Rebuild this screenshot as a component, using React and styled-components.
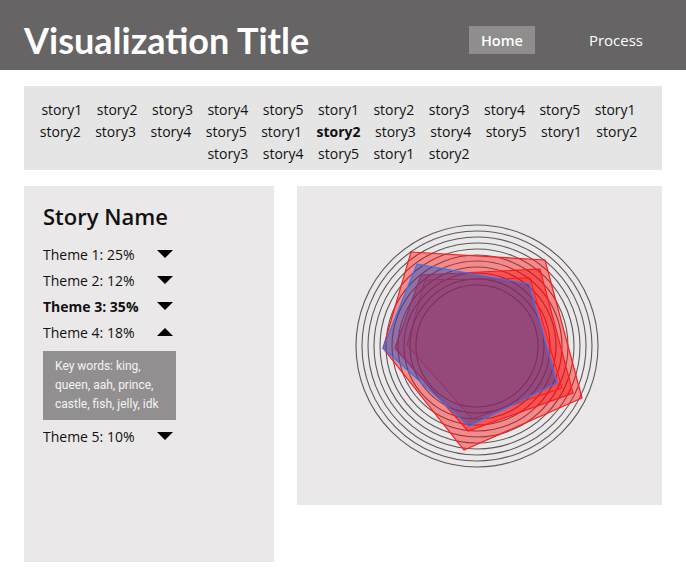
import React from "react";
import styled, { createGlobalStyle } from "styled-components";

const GlobalStyle = createGlobalStyle`
  * { box-sizing: border-box; }
  body {
    margin: 0;
    background: #fff;
    font-family: "Open Sans", "Noto Sans", sans-serif;
    color: #111;
  }
`;

const stories = Array.from({ length: 27 }, (_, i) => `story${(i % 5) + 1}`);

const themes = [
  { label: "Theme 1: 25%" },
  { label: "Theme 2: 12%" },
  { label: "Theme 3: 35%", bold: true },
  { label: "Theme 4: 18%", open: true, words: "Key words: king, queen, aah, prince, castle, fish, jelly, idk" },
  { label: "Theme 5: 10%" },
];

const rings = Array.from({ length: 11 }, (_, i) => 121 - i * 6);

const App = () => {
  return (
    <>
      <GlobalStyle />
      <Header>
        <Title>Visualization Title</Title>
        <Nav>
          <NavItem active>Home</NavItem>
          <NavItem>Process</NavItem>
        </Nav>
      </Header>

      <Main>
        <StoryBar>
          {stories.map((s, i) => (
            <Story key={i} bold={i === 16}>
              {s}
            </Story>
          ))}
        </StoryBar>

        <Panels>
          <Sidebar>
            <StoryName>Story Name</StoryName>
            {themes.map((t) => (
              <React.Fragment key={t.label}>
                <ThemeRow bold={t.bold}>
                  <span>{t.label}</span>
                  <Caret up={t.open} />
                </ThemeRow>
                {t.open && <Keywords>{t.words}</Keywords>}
              </React.Fragment>
            ))}
          </Sidebar>

          <ChartCard>
            <svg width="365" height="319" viewBox="0 0 365 319">
              {rings.map((r) => (
                <circle key={r} cx="180" cy="160" r={r} fill="none" stroke="#5a5a5a" strokeWidth="1.1" />
              ))}
              <polygon
                points="114,66 248,74 285,212 167,264 86,162"
                fill="rgba(255,0,0,0.4)"
                stroke="#ff1a1a"
                strokeWidth="1.2"
              />
              <polygon
                points="124,89 243,83 276,207 171,245 98,162"
                fill="rgba(255,0,0,0.4)"
                stroke="#ff1a1a"
                strokeWidth="1.2"
              />
              <polygon
                points="128,94 233,92 265,202 175,233 110,159"
                fill="rgba(255,0,0,0.12)"
                stroke="#ff1a1a"
                strokeWidth="1"
              />
              <polygon
                points="120,78 232,98 260,197 172,240 86,162"
                fill="rgba(0,75,200,0.4)"
                stroke="#2a78ff"
                strokeWidth="1.2"
              />
            </svg>
          </ChartCard>
        </Panels>
      </Main>
    </>
  );
};

export default App;

const Header = styled.header`
  height: 70px;
  background: #666464;
  display: flex;
  align-items: center;
  justify-content: space-between;
  padding: 10px 31px 0 24px;
`;

const Title = styled.h1`
  margin: 0;
  font-family: "Lato", "Open Sans", sans-serif;
  font-weight: 700;
  font-size: 36px;
  color: #fff;
  line-height: 1;
`;

const Nav = styled.nav`
  display: flex;
  align-items: center;
  gap: 42px;
`;

const NavItem = styled.a`
  display: flex;
  align-items: center;
  height: 28px;
  padding: 0 12px;
  color: #fff;
  font-size: ${(p) => (p.active ? "14.5px" : "15px")};
  font-weight: ${(p) => (p.active ? 600 : 400)};
  background: ${(p) => (p.active ? "#8f8d8d" : "transparent")};
`;

const Main = styled.main`
  padding: 16px 24px;
`;

const StoryBar = styled.div`
  background: #e5e5e5;
  height: 84px;
  padding: 13px 19px 5px 10px;
  display: flex;
  flex-wrap: wrap;
  justify-content: center;
  align-content: flex-start;
  column-gap: 14.5px;
`;

const Story = styled.span`
  font-size: 14px;
  line-height: 22px;
  font-weight: ${(p) => (p.bold ? 700 : 400)};
  color: #111;
`;

const Panels = styled.div`
  display: flex;
  align-items: flex-start;
  gap: 23px;
  margin-top: 16px;
`;

const Sidebar = styled.section`
  width: 250px;
  height: 376px;
  background: #eae8e9;
  padding: 16px 19px;
`;

const StoryName = styled.h2`
  margin: 0 0 11px;
  font-size: 22px;
  line-height: 28px;
  font-weight: 600;
  color: #111;
`;

const ThemeRow = styled.div`
  display: flex;
  align-items: center;
  justify-content: space-between;
  width: 130px;
  height: 26px;
  font-size: 14px;
  font-weight: ${(p) => (p.bold ? 700 : 400)};
  color: #111;
`;

const Caret = styled.span`
  width: 0;
  height: 0;
  border-left: 8px solid transparent;
  border-right: 8px solid transparent;
  border-top: ${(p) => (p.up ? "none" : "8px solid #000")};
  border-bottom: ${(p) => (p.up ? "8px solid #000" : "none")};
`;

const Keywords = styled.div`
  width: 133px;
  margin: 6px 0 3px;
  padding: 6px 12px;
  background: #918f90;
  color: #f4f4f4;
  font-family: "Roboto", sans-serif;
  font-size: 12px;
  line-height: 19px;
`;

const ChartCard = styled.section`
  flex: 1;
  height: 319px;
  background: #eae8e9;
  display: flex;

  svg {
    display: block;
  }
`;
